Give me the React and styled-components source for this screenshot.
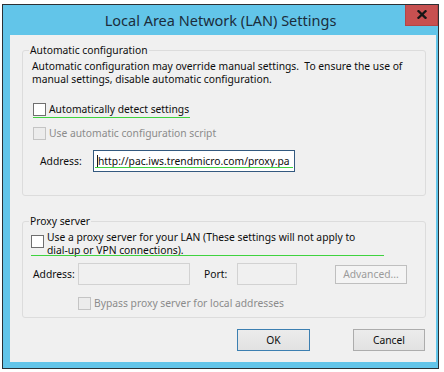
import React from "react";
import styled, { createGlobalStyle } from "styled-components";

const ui = `"Noto Sans", "Open Sans", "Liberation Sans", sans-serif`;

const GlobalStyle = createGlobalStyle`
  html, body {
    margin: 0;
    padding: 0;
    background: #ffffff;
  }
  body {
    font-family: ${ui};
    font-size: 10.3px;
    color: #0d0d0d;
  }
`;

function App() {
  return (
    <>
      <GlobalStyle />
      <Desktop>
        <Window>
          <TitleBar>
            <Title>Local Area Network (LAN) Settings</Title>
            <CloseButton aria-label="Close">
              <svg width="10" height="9" viewBox="0 0 10 9">
                <path
                  d="M1.5 1.2 L8.5 7.8 M8.5 1.2 L1.5 7.8"
                  stroke="#161616"
                  strokeWidth="2.3"
                  strokeLinecap="square"
                />
              </svg>
            </CloseButton>
          </TitleBar>

          <Client>
            <Group $pb={23}>
              <Caption>Automatic configuration</Caption>
              <Desc>
                Automatic configuration may override manual settings.&nbsp; To ensure the use of
                <br />
                manual settings, disable automatic configuration.
              </Desc>

              <CheckRow $top={17} $indent={1}>
                <Box />
                <CheckLabel>Automatically detect settings</CheckLabel>
                <Mark $top={14} $left={0} $width={157} />
              </CheckRow>

              <CheckRow $top={11} $indent={1}>
                <Box $disabled />
                <CheckLabel $disabled>Use automatic configuration script</CheckLabel>
              </CheckRow>

              <FieldRow $top={10} $indent={8}>
                <FieldLabel $width={53}>Address:</FieldLabel>
                <TextBox $width={202} $focused>
                  <Caret />
                  <span>http://pac.iws.trendmicro.com/proxy.pa</span>
                  <Mark $top={16} $left={1} $width={198} />
                </TextBox>
              </FieldRow>
            </Group>

            <Group $pb={7} $top={25}>
              <Caption>Proxy server</Caption>

              <ProxyRow>
                <Box $offset={4} />
                <CheckLabel>
                  Use a proxy server for your LAN (These settings will not apply to
                  <br />
                  dial-up or VPN connections).
                </CheckLabel>
                <Mark $top={24} $left={0} $width={353} />
              </ProxyRow>

              <FieldRow $top={6} $indent={1}>
                <FieldLabel $width={45}>Address:</FieldLabel>
                <TextBox $width={112} />
                <FieldLabel $width={33} $gap={14}>Port:</FieldLabel>
                <TextBox $width={60} />
                <SmallButton disabled>Advanced...</SmallButton>
              </FieldRow>

              <CheckRow $top={12} $indent={46}>
                <Box $disabled />
                <CheckLabel $disabled>Bypass proxy server for local addresses</CheckLabel>
              </CheckRow>
            </Group>

            <ButtonRow>
              <DialogButton $default>OK</DialogButton>
              <DialogButton>Cancel</DialogButton>
            </ButtonRow>
          </Client>
        </Window>
      </Desktop>
    </>
  );
}

const Desktop = styled.div`
  width: 444px;
  height: 372px;
  box-sizing: border-box;
  overflow: hidden;
  padding: 4px 0 0 2px;
  background: #ffffff;
`;

const Window = styled.div`
  width: 437px;
  height: 365px;
  box-sizing: border-box;
  border: 1px solid #2b3034;
  background: #62c5e9;
  display: flex;
  flex-direction: column;
`;

const TitleBar = styled.div`
  height: 30px;
  flex: none;
  display: grid;
  grid-template-columns: 34px 1fr 34px;
  align-items: start;
`;

const Title = styled.div`
  grid-column: 2;
  text-align: center;
  font-size: 14.5px;
  line-height: 28px;
  padding-top: 1px;
  color: #1b2d3c;
  white-space: nowrap;
`;

const CloseButton = styled.div`
  grid-column: 3;
  justify-self: end;
  width: 33px;
  height: 21px;
  box-sizing: border-box;
  background: #c75050;
  border: 1px solid #b44545;
  border-top: 0;
  display: flex;
  align-items: center;
  justify-content: center;
  padding-bottom: 2px;
`;

const Client = styled.div`
  flex: 1;
  margin: 0 2px 6px 7px;
  background: #f0f0f0;
  padding: 15px 10px 0 12px;
  display: flex;
  flex-direction: column;
`;

const Group = styled.div`
  border: 1px solid #dcdcdc;
  border-radius: 3px;
  margin-top: ${(p) => p.$top || 0}px;
  padding: 0 0 ${(p) => p.$pb}px 9px;
  display: flex;
  flex-direction: column;
  align-items: flex-start;
`;

const Caption = styled.div`
  margin: -7px 0 0 -3px;
  padding: 0 1px;
  background: #f0f0f0;
  line-height: 13px;
  white-space: nowrap;
`;

const Desc = styled.div`
  margin-top: 3px;
  line-height: 13px;
  white-space: nowrap;
`;

const CheckRow = styled.div`
  position: relative;
  display: flex;
  align-items: center;
  gap: 3px;
  height: 13px;
  margin-top: ${(p) => p.$top}px;
  margin-left: ${(p) => p.$indent}px;
`;

const ProxyRow = styled.div`
  position: relative;
  display: flex;
  align-items: flex-start;
  gap: 3px;
  margin-top: 3px;
  margin-left: -1px;
`;

const Box = styled.span`
  flex: none;
  width: 13px;
  height: 13px;
  box-sizing: border-box;
  margin-top: ${(p) => p.$offset || 0}px;
  border: 1px solid ${(p) => (p.$disabled ? "#c4c4c4" : "#6f6f6f")};
  background: ${(p) => (p.$disabled ? "#ececec" : "#ffffff")};
`;

const CheckLabel = styled.span`
  line-height: 13px;
  white-space: nowrap;
  color: ${(p) => (p.$disabled ? "#8b8b8b" : "inherit")};
`;

const Mark = styled.span`
  position: absolute;
  top: ${(p) => p.$top}px;
  left: ${(p) => p.$left}px;
  width: ${(p) => p.$width}px;
  height: 1px;
  background: #3fd33f;
  pointer-events: none;
`;

const FieldRow = styled.div`
  display: flex;
  align-items: center;
  margin-top: ${(p) => p.$top}px;
  margin-left: ${(p) => p.$indent}px;
`;

const FieldLabel = styled.span`
  width: ${(p) => p.$width}px;
  margin-left: ${(p) => p.$gap || 0}px;
  flex: none;
  white-space: nowrap;
`;

const TextBox = styled.div`
  position: relative;
  flex: none;
  width: ${(p) => p.$width}px;
  height: 22px;
  box-sizing: border-box;
  border: 1px solid ${(p) => (p.$focused ? "#33597f" : "#d2d2d2")};
  background: ${(p) => (p.$focused ? "#ffffff" : "#f0f0f0")};
  display: flex;
  align-items: center;
  padding-left: 3px;
  overflow: hidden;
  white-space: nowrap;
  line-height: 13px;
`;

const Caret = styled.span`
  flex: none;
  width: 1px;
  height: 13px;
  background: #1a1a1a;
`;

const SmallButton = styled.button`
  flex: none;
  margin-left: 38px;
  width: 72px;
  height: 19px;
  box-sizing: border-box;
  border: 1px solid #bfbfbf;
  background: #f4f4f4;
  color: #9b9b9b;
  font-family: ${ui};
  font-size: 10.3px;
  padding: 0;
  border-radius: 0;
`;

const ButtonRow = styled.div`
  display: flex;
  justify-content: flex-end;
  gap: 43px;
  margin-top: 11px;
  padding-right: 1px;
`;

const DialogButton = styled.button`
  width: ${(p) => (p.$default ? 73 : 72)}px;
  height: 22px;
  box-sizing: border-box;
  border: 1px solid ${(p) => (p.$default ? "#3c7fb1" : "#acacac")};
  background: linear-gradient(#ececec, #e2e2e2);
  color: #0d0d0d;
  font-family: ${ui};
  font-size: 10.3px;
  padding: 0;
  border-radius: 0;
`;

export default App;
